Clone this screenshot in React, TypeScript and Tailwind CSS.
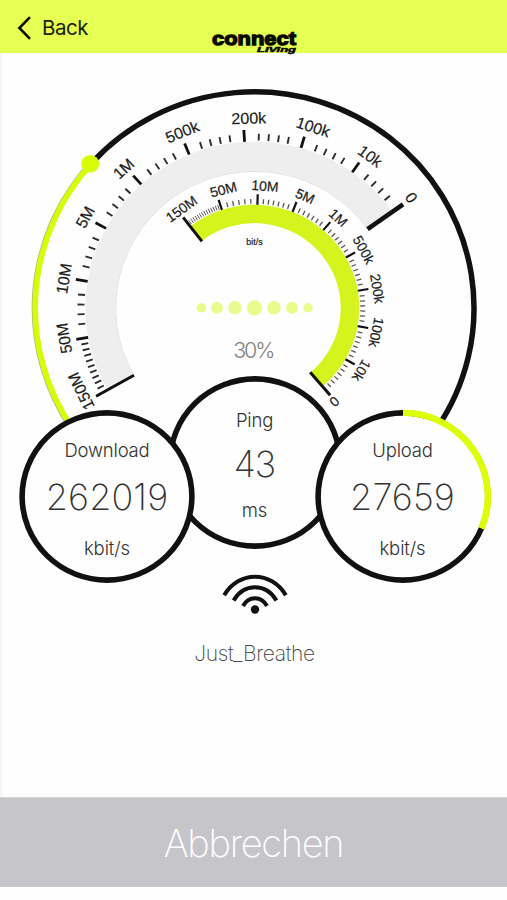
import type { ReactNode } from "react";

interface DialProps {
  start: number;
  end: number;
  inner: number;
  outer: number;
  tickEnd: number;
  majorEnd: number;
  labelRadius: number;
  labelAngles: number[];
  fontSize: number;
  fill: string;
  minor: number[];
  minorPad: number;
  minorWidth: number;
  minorColor: string;
  endWidths: [number, number];
}

const LABELS = ["150M", "50M", "10M", "5M", "1M", "500k", "200k", "100k", "10k", "0"];

// 0deg is straight up, positive is clockwise
function polar(r: number, deg: number) {
  const a = (deg * Math.PI) / 180;
  return { x: r * Math.sin(a), y: -r * Math.cos(a) };
}

function arc(r: number, from: number, to: number) {
  const a = polar(r, from);
  const b = polar(r, to);
  return `M${a.x} ${a.y}A${r} ${r} 0 ${to - from > 180 ? 1 : 0} 1 ${b.x} ${b.y}`;
}

function Tick({ deg, from, to, width, color = "#111" }: { deg: number; from: number; to: number; width: number; color?: string }) {
  const a = polar(from, deg);
  const b = polar(to, deg);
  return <line x1={a.x} y1={a.y} x2={b.x} y2={b.y} stroke={color} strokeWidth={width} />;
}

function Dial(props: DialProps) {
  const { start, end, inner, outer, minor } = props;
  const step = (end - start) / (LABELS.length - 1);
  const mid = (inner + outer) / 2;

  return (
    <g>
      <path d={arc(mid, start, end)} fill="none" stroke={props.fill} strokeWidth={outer - inner} />
      {LABELS.map((label, i) => {
        const deg = start + step * i;
        const edge = i === 0 || i === LABELS.length - 1;
        const count = minor[i] ?? 0;
        const pad = count > 6 ? 0 : props.minorPad;
        const gap = (step - pad * 2) / (count + 1);
        return (
          <g key={label}>
            <Tick
              deg={deg}
              from={edge ? inner - 0.5 : outer}
              to={edge ? props.majorEnd + 1 : props.majorEnd}
              width={i === 0 ? props.endWidths[0] : edge ? props.endWidths[1] : props.minorWidth + 0.9}
            />
            {Array.from({ length: count }).map((_, n) => (
              <Tick
                key={n}
                deg={deg + pad + gap * (n + 1)}
                from={outer + 1}
                to={props.tickEnd}
                width={count > 10 ? 1 : props.minorWidth}
                color={props.minorColor}
              />
            ))}
            <text
              transform={`rotate(${props.labelAngles[i]}) translate(0 ${-props.labelRadius})`}
              textAnchor="middle"
              dy="0.36em"
              fontSize={props.fontSize}
              fill="#1c1c1c"
              stroke="#1c1c1c"
              strokeWidth="0.2"
            >
              {label}
            </text>
          </g>
        );
      })}
    </g>
  );
}

function Gauge() {
  const knob = polar(220, -48.3);
  return (
    <svg className="block h-[390px] w-[507px] font-['Liberation_Sans',sans-serif]" viewBox="0 0 507 390">
      <g transform="translate(254.5 255) scale(1 0.985)">
        <path d={arc(219.5, -48, 124)} fill="none" stroke="#111" strokeWidth="5.5" />
        <path d={arc(220.3, -124, -48)} fill="none" stroke="#a9b48a" strokeWidth="5" />
        <path d={arc(219.3, -124, -48)} fill="none" stroke="#d7fd04" strokeWidth="5.6" />
        <circle cx={knob.x} cy={knob.y} r="9" fill="#d7fd04" />

        <path d={arc(138.8, -119.5, 54.7)} fill="none" stroke="#dcdcdc" strokeWidth="1" />
        <Dial
          start={-119.5}
          end={54.7}
          inner={139}
          outer={169}
          tickEnd={177}
          majorEnd={181}
          labelRadius={193}
          labelAngles={[-116, -99.2, -81.1, -61.4, -42.8, -22, -1.7, 17.7, 36.9, 54.5]}
          fontSize={16}
          fill="#eeeeee"
          minor={[9, 4, 4, 4, 4, 4, 4, 4, 4]}
          minorPad={1.5}
          minorWidth={1.9}
          minorColor="#2c2c2c"
          endWidths={[3, 4.6]}
        />
        <Dial
          start={-37.8}
          end={139.5}
          inner={86.2}
          outer={104.8}
          tickEnd={110.8}
          majorEnd={115.5}
          labelRadius={124.4}
          labelAngles={[-36, -14.5, 4.8, 24, 42.4, 61.6, 80.9, 101.5, 120.7, 139.9]}
          fontSize={14}
          fill="#d5f31d"
          minor={[14, 5, 6, 6, 6, 6, 6, 6, 6]}
          minorPad={0.4}
          minorWidth={1.3}
          minorColor="#555"
          endWidths={[3, 3]}
        />
      </g>
      <text x="254.5" y="192" textAnchor="middle" fontSize="9" fill="#222" stroke="#222" strokeWidth="0.2">
        bit/s
      </text>
      {[4.8, 6, 6.8, 7.6, 6.8, 6, 4.8].map((r, i) => (
        <circle key={i} cx={[201.3, 217, 235, 254.5, 274, 292, 308][i]} cy="254.8" r={r} fill="#e8fc8e" />
      ))}
      <text x="254.3" y="305" textAnchor="middle" fontSize="21.5" textLength="42" fill="#808080" className="font-['Inter',sans-serif] font-light">
        30%
      </text>
    </svg>
  );
}

function Meter({
  label,
  value,
  unit,
  progress = 0,
  compact = false,
  className,
}: {
  label: ReactNode;
  value: ReactNode;
  unit: ReactNode;
  progress?: number;
  compact?: boolean;
  className: string;
}) {
  return (
    <div className={`relative h-[173px] w-[176px] shrink-0 ${className}`}>
      <svg className="absolute inset-0" width="176" height="173" viewBox="0 0 176 173">
        <g transform="translate(88 86.5) scale(1 0.985)">
          <circle r="84.9" fill="#fefefe" stroke="#111" strokeWidth="5.6" />
          {progress > 0 && <path d={arc(84.9, 0, progress)} fill="none" stroke="#dcff05" strokeWidth="6.6" />}
        </g>
      </svg>
      <div className={`relative flex h-full flex-col items-center text-[#333] ${compact ? "pt-8" : "pt-[28px]"}`}>
        <span className="text-[18.5px] leading-6 font-light tracking-[-0.2px]">{label}</span>
        <span className={`text-[36px] leading-9 font-extralight ${compact ? "mt-3.5 tracking-[-1px]" : "mt-[17px] tracking-[0.1px]"}`}>
          {value}
        </span>
        <span className={`text-[18.5px] leading-6 font-light tracking-[-0.1px] ${compact ? "mt-4" : "mt-[21px]"}`}>{unit}</span>
      </div>
    </div>
  );
}

function Header() {
  return (
    <header className="flex h-[53px] shrink-0 bg-[#e5ff52]">
      <button className="flex w-[211px] items-center gap-2.5 pt-[3px] pl-[17px] text-[20.5px] tracking-[-0.5px] text-[#1c2005]">
        <svg width="15" height="24" viewBox="0 0 15 24" fill="none" stroke="#0c0e00" strokeWidth="2.6">
          <path d="M13 1.2 2.4 12 13 22.8" />
        </svg>
        Back
      </button>
      <svg
        className="h-[53px] w-[88px] overflow-visible font-['Liberation_Sans',sans-serif] font-bold"
        viewBox="0 0 88 53"
        fill="#080a00"
        stroke="#080a00"
      >
        <text x="1" y="44.6" fontSize="19" strokeWidth="1.3" textLength="84" lengthAdjust="spacingAndGlyphs">
          connect
        </text>
        <text x="46" y="51.8" fontSize="7.5" fontStyle="italic" strokeWidth="0.5" textLength="39" lengthAdjust="spacingAndGlyphs">
          LIVing
        </text>
      </svg>
    </header>
  );
}

function WifiIcon() {
  return (
    <svg width="66" height="42" viewBox="0 0 66 42" fill="none" stroke="#111" strokeWidth="4">
      <path d="M2.2 22.2C17 -2.5 49 -2.5 63.8 22.2" />
      <path d="M11.6 27.4C22 9.8 44 9.8 54.4 27.4" />
      <path d="M21 33C26.5 22.5 39.5 22.5 45 33" />
      <circle cx="33" cy="36.5" r="4.2" fill="#111" stroke="none" />
    </svg>
  );
}

export default function App() {
  return (
    <div className="flex h-[900px] w-[507px] flex-col overflow-hidden bg-[#fefefe] font-['Inter',sans-serif]">
      <Header />
      <main className="flex flex-1 flex-col items-center border-l-2 border-[#f6f6f6]">
        <div className="-ml-0.5">
          <Gauge />
        </div>
        <div className="-mt-[67px] -ml-0.5 flex h-[207px] w-[507px] items-start pl-[19px]">
          <Meter className="z-10 mt-[34px]" label="Download" value="262019" unit="kbit/s" />
          <Meter className="-ml-[28.5px]" label="Ping" value="43" unit="ms" compact />
          <Meter className="z-10 mt-[34px] -ml-[28px]" label="Upload" value="27659" unit="kbit/s" progress={112.5} />
        </div>
        <div className="-mt-[10px] flex flex-col items-center">
          <WifiIcon />
          <p className="mt-[25px] text-[21px] leading-7 font-extralight tracking-[-0.3px] text-[#444]">Just_Breathe</p>
        </div>
      </main>
      <button className="mb-[13px] h-[90px] shrink-0 border-t border-[#d6d5d9] bg-[#c6c5ca] pt-0.5 text-[38px] font-extralight tracking-[-1.3px] text-white">
        Abbrechen
      </button>
    </div>
  );
}
